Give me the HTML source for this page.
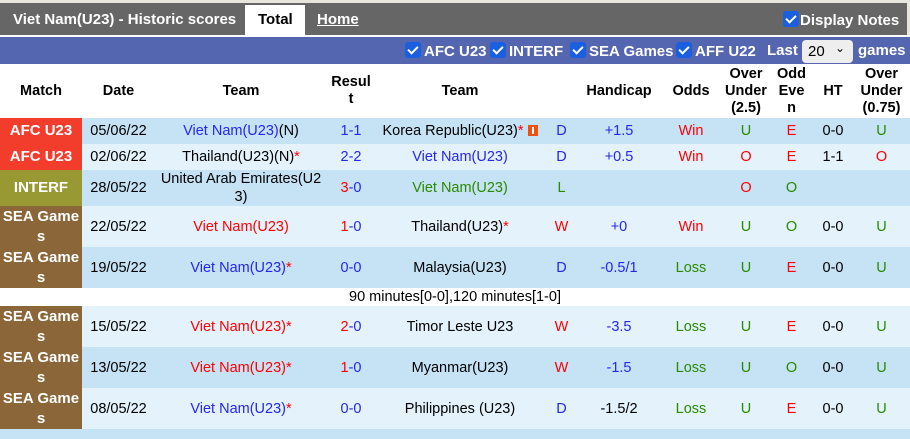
<!DOCTYPE html>
<html><head><meta charset="utf-8"><style>
body{margin:0;width:910px;height:432px;overflow:hidden;background:#fff;font-family:"Liberation Sans",Arial,sans-serif;}
.top{position:absolute;left:0;top:0;width:910px;height:3px;background:#e6e6de}
.bar{position:absolute;left:0;top:3px;width:907px;height:32px;background:#666;border-right:3px solid #e6e6de}
.bar span{position:absolute;top:8px;color:#fff;font-weight:bold;font-size:15px}
.tab{position:absolute;left:245px;top:2px;width:60px;height:30px;background:#fff}
.blue{position:absolute;left:0;top:37px;width:910px;height:27px;background:#5566b0;color:#fff;font-weight:bold;font-size:15px}
.cb{display:inline-block;width:16px;height:16px;background:#1a5fe0;border-radius:3px;vertical-align:-2px;position:relative;margin-right:3px}
.cb:after{content:"";position:absolute;left:5px;top:2px;width:4px;height:8px;border:solid #fff;border-width:0 2px 2px 0;transform:rotate(45deg)}
.bl{position:absolute;top:5px;white-space:nowrap}
.sel{position:absolute;left:802px;top:40px;width:51px;height:23px;background:#eee;border-radius:4px;color:#000;font-weight:normal;font-size:15px}
table{position:absolute;left:0;top:64px;border-collapse:collapse;table-layout:fixed;width:910px;font-size:14.5px}
td{text-align:center;padding:0;line-height:18px}
th{font-weight:bold;font-size:14.5px;line-height:17px;padding:0}
.a{background:#c6e2f5}.b{background:#e4f2fb}
.m{color:#fff;font-weight:bold;font-size:15px;line-height:20px}
.afc{background:#f23c2c}.int{background:#999933}.sea{background:#8b6638}
.bu{color:#2626f0}.r{color:#f00}.g{color:#2a8a00}.k{color:#000}
</style></head><body>
<div class="top"></div>
<div class="bar"><span style="left:13px">Viet Nam(U23) - Historic scores</span><div class="tab"></div><span style="left:258px;color:#000">Total</span><span style="left:317px;text-decoration:underline">Home</span><span style="left:783px"><i class="cb" style="margin-right:1px"></i>Display Notes</span></div>
<div class="blue">
<span class="bl" style="left:405px"><i class="cb"></i>AFC U23</span>
<span class="bl" style="left:490px"><i class="cb"></i>INTERF</span>
<span class="bl" style="left:570px"><i class="cb"></i>SEA Games</span>
<span class="bl" style="left:676px"><i class="cb"></i>AFF U22</span>
<span class="bl" style="left:767px">Last</span>
<span class="bl" style="left:858px">games</span>
</div>
<div class="sel"><span style="position:absolute;left:6px;top:3px">20</span><span style="position:absolute;left:33px;top:1px;font-size:12px">&#8964;</span></div>
<table>
<colgroup><col style="width:82px"><col style="width:73px"><col style="width:172px"><col style="width:48px"><col style="width:170px"><col style="width:33px"><col style="width:82px"><col style="width:62px"><col style="width:48px"><col style="width:43px"><col style="width:40px"><col style="width:57px"></colgroup>
<tr style="height:54px"><th>Match</th><th>Date</th><th>Team</th><th>Resul<br>t</th><th>Team</th><th></th><th>Handicap</th><th>Odds</th><th>Over<br>Under<br>(2.5)</th><th>Odd<br>Eve<br>n</th><th>HT</th><th>Over<br>Under<br>(0.75)</th></tr>
<tr class="a" style="height:26px"><td class="m afc">AFC U23</td><td>05/06/22</td><td class="bu">Viet Nam(U23)<span class="k">(N)</span></td><td class="bu">1-1</td><td>Korea Republic(U23)<span class="r">*</span> <span style="display:inline-block;width:10px;height:11px;background:#f05010;vertical-align:-1px;position:relative"><span style="position:absolute;left:4px;top:2px;width:2px;height:7px;background:#fff"></span></span></td><td class="bu">D</td><td class="bu">+1.5</td><td class="r">Win</td><td class="g">U</td><td class="r">E</td><td>0-0</td><td class="g">U</td></tr>
<tr class="b" style="height:26px"><td class="m afc">AFC U23</td><td>02/06/22</td><td>Thailand(U23)(N)<span class="r">*</span></td><td class="bu">2-2</td><td class="bu">Viet Nam(U23)</td><td class="bu">D</td><td class="bu">+0.5</td><td class="r">Win</td><td class="r">O</td><td class="r">E</td><td>1-1</td><td class="r">O</td></tr>
<tr class="a" style="height:36px"><td class="m int">INTERF</td><td>28/05/22</td><td>United Arab Emirates(U2<br>3)</td><td><span class="r">3</span><span class="bu">-0</span></td><td class="g">Viet Nam(U23)</td><td class="g">L</td><td></td><td></td><td class="r">O</td><td class="g">O</td><td></td><td></td></tr>
<tr class="b" style="height:41px"><td class="m sea">SEA Game<br>s</td><td>22/05/22</td><td class="r">Viet Nam(U23)</td><td class="r">1<span class="bu">-0</span></td><td>Thailand(U23)<span class="r">*</span></td><td class="r">W</td><td class="bu">+0</td><td class="r">Win</td><td class="g">U</td><td class="g">O</td><td>0-0</td><td class="g">U</td></tr>
<tr class="a" style="height:41px"><td class="m sea">SEA Game<br>s</td><td>19/05/22</td><td class="bu">Viet Nam(U23)<span class="r">*</span></td><td class="bu">0-0</td><td>Malaysia(U23)</td><td class="bu">D</td><td class="bu">-0.5/1</td><td class="g">Loss</td><td class="g">U</td><td class="r">E</td><td>0-0</td><td class="g">U</td></tr>
<tr style="height:18px;background:#fff"><td colspan="12" style="line-height:18px">90 minutes[0-0],120 minutes[1-0]</td></tr>
<tr class="b" style="height:41px"><td class="m sea">SEA Game<br>s</td><td>15/05/22</td><td class="r">Viet Nam(U23)*</td><td class="r">2<span class="bu">-0</span></td><td>Timor Leste U23</td><td class="r">W</td><td class="bu">-3.5</td><td class="g">Loss</td><td class="g">U</td><td class="r">E</td><td>0-0</td><td class="g">U</td></tr>
<tr class="a" style="height:41px"><td class="m sea">SEA Game<br>s</td><td>13/05/22</td><td class="r">Viet Nam(U23)*</td><td class="r">1<span class="bu">-0</span></td><td>Myanmar(U23)</td><td class="r">W</td><td class="bu">-1.5</td><td class="g">Loss</td><td class="g">U</td><td class="g">O</td><td>0-0</td><td class="g">U</td></tr>
<tr class="b" style="height:41px"><td class="m sea">SEA Game<br>s</td><td>08/05/22</td><td class="bu">Viet Nam(U23)<span class="r">*</span></td><td class="bu">0-0</td><td>Philippines (U23)</td><td class="bu">D</td><td>-1.5/2</td><td class="g">Loss</td><td class="g">U</td><td class="r">E</td><td>0-0</td><td class="g">U</td></tr>
<tr class="a" style="height:10px"><td colspan="12"></td></tr>
</table>
</body></html>
